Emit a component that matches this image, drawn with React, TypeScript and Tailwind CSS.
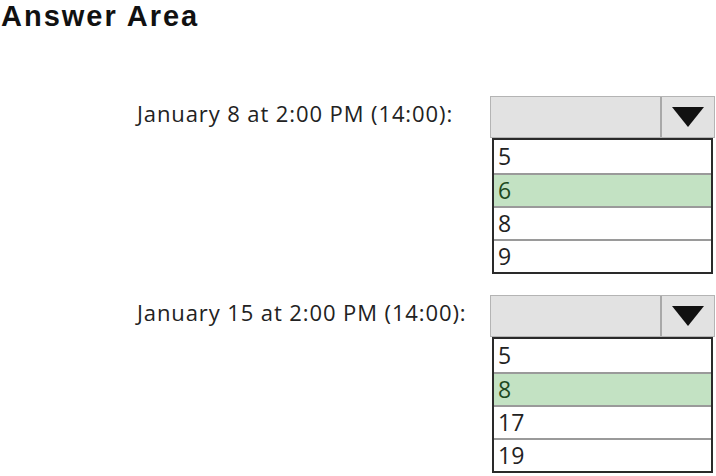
const labelFont = { fontFamily: '"Open Sans", "Noto Sans", sans-serif' };

function Dropdown({ options, selected }: { options: string[]; selected: number }) {
  return (
    <div className="w-[225px]">
      <div className="h-[42px] flex bg-[#e2e2e2] border border-[#b4b4b4]">
        <div className="flex-1" />
        <div className="w-[54px] flex items-center justify-center border-l-2 border-[#a8a8a8]">
          <svg width="34" height="22" viewBox="0 0 34 22">
            <path d="M1 1 L33 1 L17 21 Z" fill="#111" />
          </svg>
        </div>
      </div>
      <div className="ml-[2px] w-[221px] border-2 border-[#2a2a2a]">
        {options.map((o, i) => (
          <div
            key={o}
            className={
              "h-[33px] flex items-center pl-[4px] text-[23px] leading-[31px] " +
              (i > 0 ? "border-t-2 border-[#9a9a9a] " : "") +
              (i === selected ? "bg-[#c3e2c3] text-[#1e4a1e]" : "bg-white text-[#222]")
            }
            style={labelFont}
          >
            {o}
          </div>
        ))}
      </div>
    </div>
  );
}

function Question({ label, options }: { label: string; options: string[] }) {
  return (
    <div className="flex">
      <div
        className="w-[490px] pl-[137px] pt-[2px] h-[42px] text-[22px] leading-[30px] tracking-[0.9px] text-[#222]"
        style={labelFont}
      >
        {label}
      </div>
      <Dropdown options={options} selected={1} />
    </div>
  );
}

export default function App() {
  return (
    <div className="w-[716px] h-[476px] bg-white overflow-hidden">
      <h1
        className="pl-[1px] text-[29px] leading-[32px] font-bold tracking-[2px] text-[#111]"
        style={{ fontFamily: '"Liberation Sans", Arial, sans-serif' }}
      >
        Answer Area
      </h1>

      <div className="mt-[64px]">
        <Question label="January 8 at 2:00 PM (14:00):" options={["5", "6", "8", "9"]} />
      </div>

      <div className="mt-[21px]">
        <Question label="January 15 at 2:00 PM (14:00):" options={["5", "8", "17", "19"]} />
      </div>
    </div>
  );
}
